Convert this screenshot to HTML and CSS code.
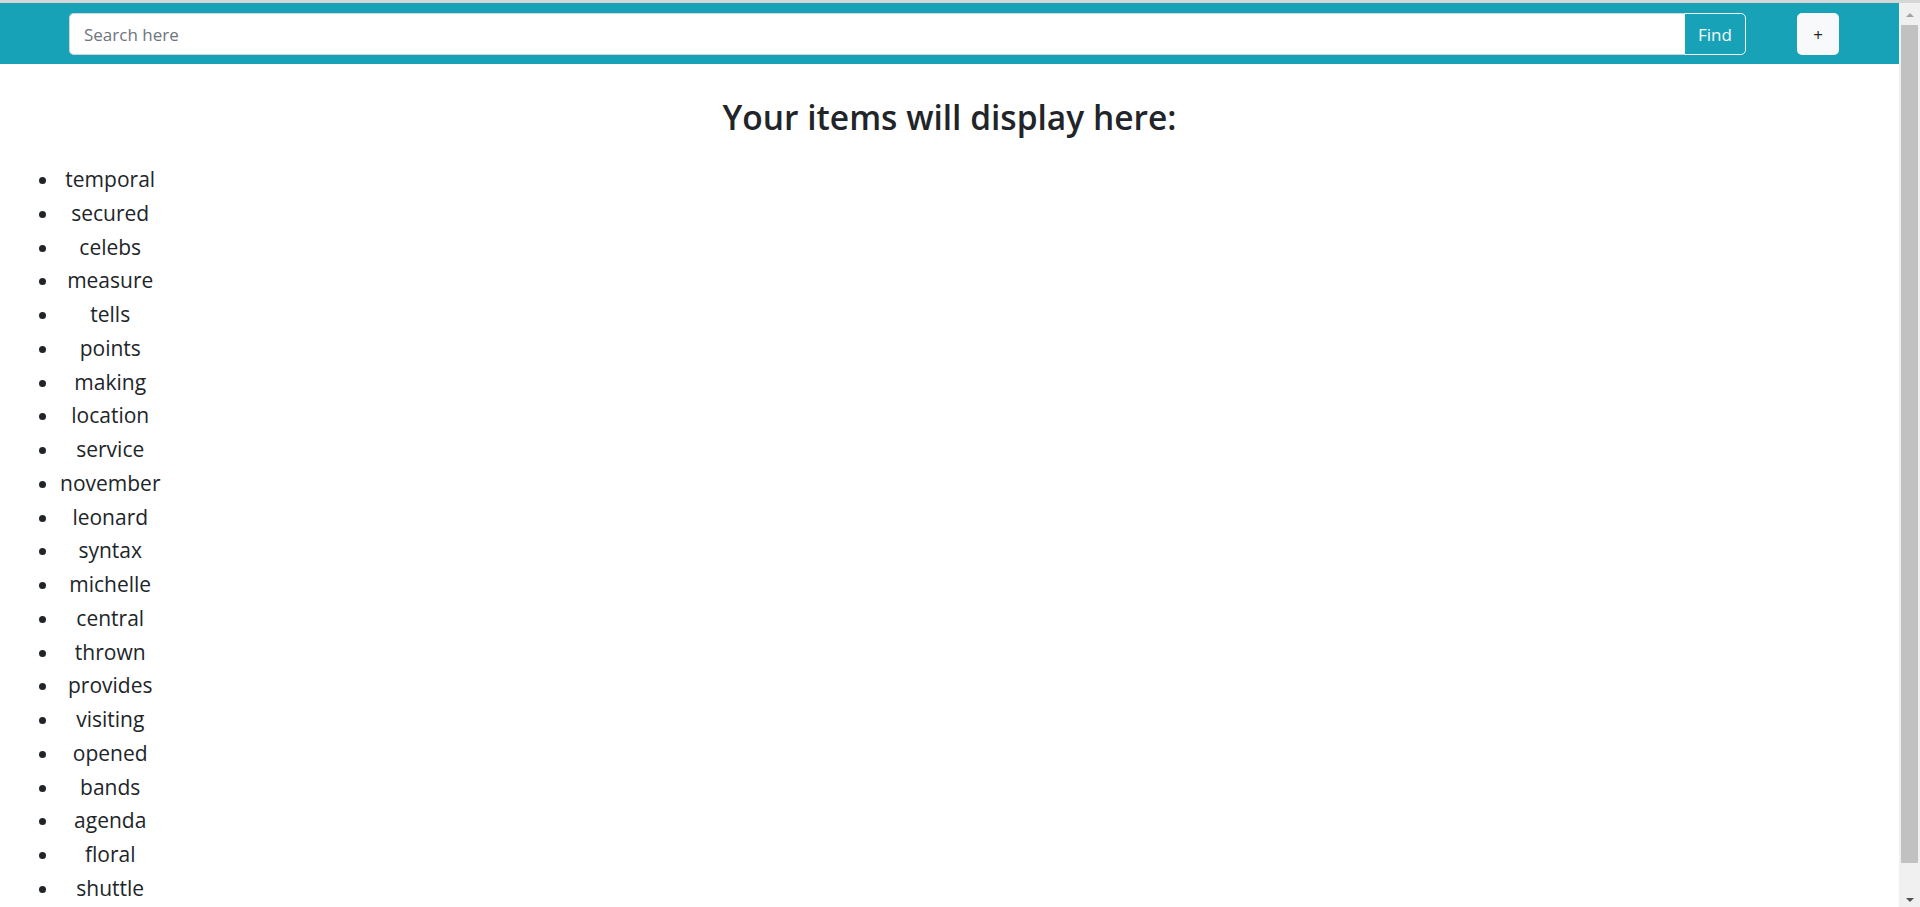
FILE: index.html
```html
<!DOCTYPE html>
<html lang="en">
<head>
<meta charset="utf-8">
<title>Items</title>
<link rel="stylesheet" href="styles.css">
</head>
<body>
<div class="topline"></div>
<div class="frame">
  <div class="page">
    <nav class="navbar">
      <form class="search" onsubmit="return false">
        <input class="search-input" type="text" placeholder="Search here">
        <button class="find-btn" type="submit">Find</button>
      </form>
      <button class="add-btn" type="button">+</button>
    </nav>
    <h2 class="title">Your items will display here:</h2>
    <ul class="items">
      <li>temporal</li>
      <li>secured</li>
      <li>celebs</li>
      <li>measure</li>
      <li>tells</li>
      <li>points</li>
      <li>making</li>
      <li>location</li>
      <li>service</li>
      <li>november</li>
      <li>leonard</li>
      <li>syntax</li>
      <li>michelle</li>
      <li>central</li>
      <li>thrown</li>
      <li>provides</li>
      <li>visiting</li>
      <li>opened</li>
      <li>bands</li>
      <li>agenda</li>
      <li>floral</li>
      <li>shuttle</li>
    </ul>
  </div>
  <div class="scrollbar">
    <div class="sb-arrow sb-up"></div>
    <div class="sb-thumb"></div>
    <div class="sb-arrow sb-down"></div>
  </div>
</div>
</body>
</html>
```
FILE: styles.css
```css
html, body {
  margin: 0;
  padding: 0;
  height: 100%;
  overflow: hidden;
}
body {
  font-family: "Open Sans", "Noto Sans", sans-serif;
  color: #212529;
  background: #fff;
  display: flex;
  flex-direction: column;
}
.topline {
  height: 3px;
  background: #d6d6d6;
  flex: none;
}
.frame {
  flex: 1;
  display: grid;
  grid-template-columns: 1fr 21px;
  min-height: 0;
}
.page {
  overflow: hidden;
  min-width: 0;
}
.navbar {
  background: #17a2b8;
  height: 61px;
  box-sizing: border-box;
  padding: 10px 60px 9px 69px;
  display: flex;
  align-items: flex-start;
  gap: 51px;
}
.search {
  flex: 1;
  display: flex;
  margin: 0;
  height: 42px;
}
.search-input {
  flex: 1;
  min-width: 0;
  height: 42px;
  box-sizing: border-box;
  border: 1px solid #ced4da;
  border-right: none;
  border-radius: 5px 0 0 5px;
  padding: 0 14px;
  font-family: inherit;
  font-size: 17px;
  color: #495057;
  background: #fff;
  outline: none;
}
.search-input::placeholder {
  color: #6c757d;
}
.find-btn {
  width: 62px;
  height: 42px;
  box-sizing: border-box;
  border: 1px solid #f8f9fa;
  border-radius: 0 5px 5px 0;
  background: #17a2b8;
  color: #f8f9fa;
  font-family: inherit;
  font-size: 17px;
  padding: 0;
}
.add-btn {
  width: 42px;
  height: 42px;
  border: none;
  border-radius: 5px;
  background: #f8f9fa;
  color: #212529;
  font-family: inherit;
  font-size: 17px;
  padding: 0;
}
.title {
  margin: 29px 0 22px;
  text-align: center;
  font-size: 33.5px;
  font-weight: 600;
  line-height: 48px;
}
.items {
  display: inline-block;
  margin: 0 0 20px;
  padding: 0 0 0 60px;
  list-style: disc outside;
  text-align: center;
  font-size: 21px;
  line-height: 33.75px;
}
.scrollbar {
  background: #f0f0f0;
  display: flex;
  flex-direction: column;
  align-items: center;
}
.sb-arrow {
  width: 0;
  height: 0;
  border-left: 4px solid transparent;
  border-right: 4px solid transparent;
}
.sb-up {
  margin-top: 10px;
  border-bottom: 4px solid #a3a3a3;
}
.sb-thumb {
  margin-top: 8px;
  width: 17px;
  height: 838px;
  background: #c1c1c1;
}
.sb-down {
  margin-top: 35px;
  border-top: 4px solid #505050;
}
```
